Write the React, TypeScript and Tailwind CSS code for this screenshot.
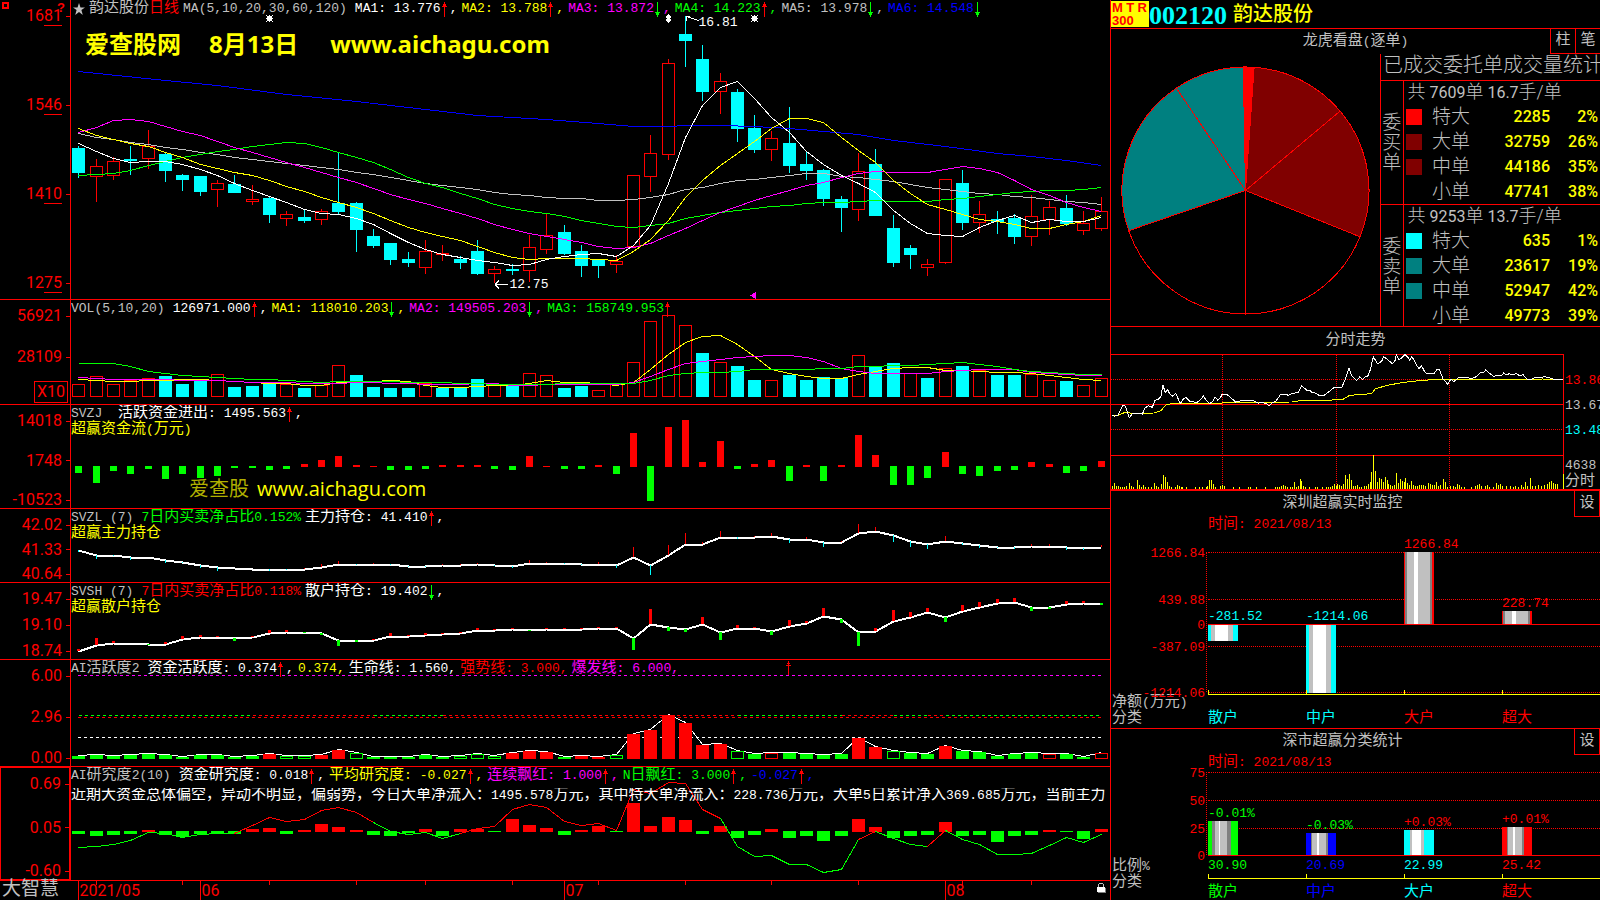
import type { ReactNode } from 'react';

// ---------------------------------------------------------------------------
// Data. All y values are in the plot's own units, counted from the panel's top.
// ---------------------------------------------------------------------------

// [direction, high, bodyTop, bodyBottom, low] - 1 is up (hollow red), 0 is down
type Candle = [number, number, number, number, number];

const CANDLES: Candle[] = [
  [0, 146, 148, 173, 178], [1, 159, 166, 177, 202], [1, 157, 161, 176, 180], [0, 146, 159, 161, 175],
  [1, 130, 146, 159, 169], [0, 153, 154, 171, 182], [0, 174, 175, 180, 191], [0, 176, 176, 192, 196],
  [1, 180, 183, 190, 207], [0, 175, 184, 193, 193], [1, 185, 199, 202, 205], [0, 196, 198, 215, 223],
  [1, 211, 214, 219, 226], [0, 209, 217, 221, 223], [1, 209, 211, 220, 225], [0, 153, 203, 212, 214],
  [0, 202, 203, 230, 252], [0, 229, 236, 246, 248], [0, 243, 243, 260, 265], [0, 252, 259, 263, 267],
  [1, 240, 251, 268, 274], [1, 245, 253, 255, 261], [0, 256, 259, 263, 269], [0, 240, 251, 274, 275],
  [1, 266, 269, 274, 283], [0, 264, 269, 271, 275], [1, 235, 247, 271, 282], [1, 214, 235, 250, 254],
  [0, 225, 232, 254, 255], [0, 245, 251, 266, 277], [0, 259, 259, 266, 278], [1, 255, 261, 265, 273],
  [1, 175, 175, 247, 247], [1, 135, 153, 177, 192], [1, 59, 63, 155, 160], [0, 16, 34, 41, 67],
  [0, 45, 59, 92, 101], [1, 73, 81, 92, 114], [0, 89, 92, 129, 142], [0, 115, 128, 150, 153],
  [1, 131, 138, 150, 161], [0, 107, 143, 166, 173], [0, 151, 164, 171, 180], [0, 169, 170, 199, 206],
  [0, 196, 199, 208, 232], [1, 153, 171, 210, 221], [0, 149, 164, 216, 216], [0, 215, 228, 263, 267],
  [0, 245, 248, 255, 269], [1, 259, 264, 268, 276], [1, 179, 179, 263, 264], [0, 170, 183, 223, 230],
  [1, 201, 214, 223, 233], [0, 211, 219, 222, 234], [0, 214, 218, 237, 244], [1, 195, 216, 237, 246],
  [1, 201, 207, 220, 235], [0, 195, 208, 224, 226], [1, 211, 223, 231, 235], [1, 197, 211, 229, 231],
];

const MA5 = [143, 151, 158, 162, 161, 161, 164, 169, 175, 183, 190, 196, 202, 209, 213, 214, 218, 224, 233, 242, 249, 254, 257, 260, 262, 265, 264, 259, 256, 254, 253, 256, 245, 225, 183, 137, 105, 87, 81, 98, 117, 132, 151, 164, 175, 183, 192, 210, 223, 233, 235, 236, 227, 220, 215, 222, 219, 221, 221, 217];
const MA10 = [128, 135, 139, 143, 146, 152, 157, 164, 168, 172, 175, 180, 186, 191, 197, 202, 207, 213, 220, 227, 232, 236, 240, 246, 252, 257, 259, 258, 258, 258, 259, 260, 251, 239, 220, 197, 180, 165, 153, 141, 128, 118, 118, 122, 137, 150, 162, 180, 193, 204, 209, 214, 219, 221, 224, 228, 228, 224, 221, 215];
const MA20 = [132, 127, 120, 119, 121, 126, 131, 135, 141, 147, 152, 157, 162, 167, 172, 177, 182, 188, 194, 199, 203, 208, 213, 218, 224, 229, 233, 236, 239, 242, 246, 248, 247, 243, 235, 228, 220, 212, 206, 200, 195, 190, 185, 182, 177, 173, 171, 172, 172, 172, 169, 166, 168, 172, 180, 189, 195, 202, 207, 211];
const MA30 = [175, 174, 173, 170, 165, 161, 157, 154, 151, 149, 146, 144, 142, 143, 147, 152, 157, 162, 169, 177, 183, 187, 193, 198, 204, 208, 211, 213, 216, 220, 223, 226, 227, 225, 223, 218, 215, 212, 210, 208, 206, 205, 203, 202, 202, 201, 200, 201, 201, 201, 199, 198, 196, 194, 192, 191, 190, 190, 189, 187];
const MA60 = [133, 137, 139, 142, 144, 147, 149, 152, 154, 157, 159, 161, 163, 165, 167, 169, 172, 174, 177, 180, 183, 185, 187, 189, 192, 194, 195, 197, 198, 198, 200, 200, 199, 197, 194, 189, 187, 183, 180, 179, 177, 175, 173, 173, 176, 177, 179, 181, 184, 187, 189, 191, 193, 194, 196, 197, 199, 201, 202, 204];
// index -> y, the long average is nearly straight
const MA120: [number, number][] = [
  [0, 71], [5, 80], [8, 85], [12, 94], [16, 101], [20, 109], [23, 115], [27, 119], [30, 123], [32, 126],
  [34, 126], [35, 125], [37, 125], [39, 126], [41, 128], [45, 134], [47, 140], [50, 146], [53, 153], [55, 156], [57, 160], [59, 165],
];

// positive is a red bar, negative a cyan or green one
const VOLUME = [12, 20, 12, 16, 18, -21, -13, -18, 22, -10, -11, -14, 12, -9, 11, 31, -22, -10, -9, -9, 13, -9, -9, -18, 11, -12, 23, 21, -9, -11, 6, 12, 34, 75, 81, 71, -44, 34, -31, -17, 16, -22, -17, -20, -19, 41, -31, -34, 23, -19, 28, -31, 26, -22, -22, 22, 16, -16, 11, 18];
const VMA5 = [79, 80, 81, 81, 80, 80, 79, 79, 80, 81, 82, 83, 83, 85, 85, 82, 81, 81, 80, 81, 85, 87, 87, 86, 85, 85, 83, 80, 82, 82, 83, 85, 82, 69, 54, 42, 36, 35, 44, 56, 69, 73, 76, 78, 78, 74, 71, 68, 67, 67, 70, 70, 71, 72, 72, 73, 75, 77, 79, 80];
const VMA10 = [77, 78, 79, 79, 79, 79, 80, 80, 80, 81, 82, 82, 82, 83, 83, 83, 82, 82, 83, 83, 84, 84, 84, 83, 83, 85, 85, 84, 84, 84, 84, 84, 82, 76, 69, 63, 61, 59, 57, 56, 55, 55, 57, 61, 68, 71, 73, 73, 73, 73, 71, 70, 69, 69, 69, 72, 73, 74, 75, 75];
const VMA20 = [63, 63, 63, 66, 71, 73, 75, 76, 77, 78, 79, 79, 80, 81, 82, 81, 81, 81, 81, 82, 82, 82, 83, 83, 84, 84, 84, 84, 83, 83, 83, 83, 83, 80, 75, 73, 72, 72, 71, 69, 69, 69, 69, 68, 68, 66, 66, 65, 65, 64, 63, 62, 64, 66, 69, 71, 72, 73, 74, 74];

const FUND_FLOW = [-7, -17, -5, -8, -3, -13, -8, -12, -10, -2, -2, -4, -3, 3, 7, 11, 2, 1, -4, -4, -3, 2, 2, 2, -3, -4, 11, 1, -3, -3, 2, -8, 34, -35, 40, 47, 5, 26, -3, 3, 7, -15, 2, -15, 2, 32, 12, -19, -19, -12, 15, -8, -10, -5, -4, 5, 3, -7, -5, 6];

const MAIN_HOLD = [41, 46, 46, 48, 48, 51, 53, 56, 58, 59, 60, 60, 60, 60, 58, 55, 55, 55, 55, 57, 57, 56, 56, 55, 56, 57, 54, 54, 54, 55, 55, 56, 48, 56, 46, 35, 35, 28, 28, 28, 27, 30, 30, 33, 33, 24, 22, 26, 32, 35, 32, 34, 36, 38, 38, 37, 37, 38, 39, 38];
const MAIN_TICKS = [-2, -4, -1, -3, 0, -3, -1, -3, -4, 0, 0, -2, -1, 1, 3, 3, -1, 1, -1, -1, -1, 1, 1, 1, -1, -2, 3, 1, -1, -1, 2, -3, 10, -10, 10, 11, 2, 6, -2, 1, 3, -4, 2, -5, 1, 9, 4, -7, -6, -5, 5, -2, -3, -1, -2, 2, 2, -3, -2, 2];

const RETAIL_HOLD = [68, 62, 60, 60, 61, 61, 56, 54, 54, 55, 54, 50, 49, 49, 50, 57, 57, 57, 53, 53, 52, 51, 50, 47, 47, 46, 47, 46, 46, 46, 45, 45, 55, 41, 44, 46, 41, 49, 45, 45, 48, 43, 40, 33, 36, 49, 48, 38, 34, 29, 34, 28, 24, 20, 19, 24, 24, 21, 20, 20];
const RETAIL_TICKS = [2, 7, 2, 0, -1, 2, 3, 2, 1, -3, 1, 3, 2, -1, -2, -6, -2, 1, 3, 1, 2, 1, 1, 2, 1, 1, -1, 1, 1, 1, 1, 1, -12, 15, -4, -3, 7, -8, 3, 1, -4, 6, 2, 8, -4, -14, 3, 11, 5, 4, -5, 6, 5, 4, 4, -4, -2, 3, 2, -2];

// g/r are solid green/red bars, G/R the hollow ones
const ACTIVITY = 'g3 g4 g3 g4 g5 g4 g2 g4 g4 g2 g3 r5 G3 G3 r4 r9 G6 g2 g2 g2 g4 g2 G3 G5 G3 r6 r8 r7 g2 r3 r2 G4 r25 r29 r44 r36 r14 r15 G8 g5 R6 g6 g5 g4 g5 r21 r12 G8 g6 g5 r13 g8 g7 g3 g5 g6 R5 g5 g2 R6'
  .split(' ')
  .map((s) => ({ kind: s[0], h: Number(s.slice(1)) }));
const ACTIVITY_BANDS: [number, number, string][] = [
  [0, 10, '#0f0'], [10, 17, '#f00'], [17, 21, '#0f0'], [21, 38, '#f00'], [38, 44, '#0f0'],
  [44, 47, '#f00'], [47, 49, '#0f0'], [49, 50, '#f00'], [50, 59, '#0f0'],
];

const RESEARCH = [-3, -5, -4, -3, 2, -4, -6, -3, -3, -3, 3, 4, -3, 2, 8, 5, 2, -4, -5, -2, 3, -5, 3, 3, -1, 13, 7, 4, -4, 2, 6, -1, 29, 6, 15, 12, -3, 6, -7, -4, 3, -7, -5, -10, -5, 13, 5, -7, -5, -4, 10, -5, -4, -11, -5, -4, 2, -1, -8, 3];
const RESEARCH_LINE = [80, 79, 77, 73, 65, 66, 70, 67, 66, 66, 58, 50, 54, 52, 43, 40, 45, 55, 64, 67, 65, 71, 66, 61, 59, 42, 37, 40, 54, 58, 56, 63, 22, 26, 15, 16, 42, 51, 79, 89, 88, 97, 97, 105, 102, 72, 64, 71, 77, 79, 63, 72, 77, 87, 87, 86, 78, 70, 75, 67];
const RESEARCH_BANDS: [number, number, string][] = [
  [0, 9, '#0f0'], [9, 17, '#f00'], [17, 22, '#0f0'], [22, 37, '#f00'], [37, 45, '#0f0'],
  [45, 46, '#f00'], [46, 49, '#0f0'], [49, 50, '#f00'], [50, 59, '#0f0'],
];

const PRICE = '20,271 28,275 38,272 46,258 54,242 60,244 66,258 73,279 84,265 96,265 112,268 120,250 130,243 142,248 150,227 160,224 168,215 174,180 180,203 188,195 194,208 204,215 212,206 226,237 236,222 244,219 256,231 276,233 286,226 295,214 304,228 314,237 324,229 330,217 338,226 346,219 352,208 364,208 376,218 392,232 416,227 444,227 460,236 470,233 482,236 493,243 502,234 512,230 528,208 544,208 550,213 560,206 580,204 590,184 600,192 606,198 614,196 622,204 630,205 646,214 656,213 672,201 684,191 690,187 700,190 710,189 716,175 724,155 732,131 740,153 755,168 764,157 772,164 780,157 788,155 797,133 802,106 806,97 812,108 818,117 830,110 836,96 846,103 862,117 870,108 874,89 882,105 890,100 900,89 908,97 914,106 920,96 926,104 934,120 942,132 950,124 960,143 966,146 988,146 996,134 1004,136 1014,163 1028,178 1038,163 1046,171 1062,158 1086,158 1100,162 1116,155 1128,142 1136,144 1142,136 1150,143 1166,155 1180,151 1188,154 1196,145 1206,151 1212,147 1222,151 1234,147 1244,153 1254,150 1264,162 1276,166 1290,158 1300,160 1318,156 1334,160 1350,165 1374,166';
const AVERAGE = '20,272 40,272 58,264 110,267 146,265 168,258 184,239 215,236 350,236 356,233 560,232 596,226 680,226 690,223 716,223 734,212 800,207 810,193 846,182 880,176 920,170 970,166 1300,165 1310,163 1374,164';
const MINUTE_VOL = '22,484 28,474 34,483 40,484 46,486 52,486 58,486 64,483 73,474 80,485 86,487 97,465 104,482 110,486 115,482 122,488 130,488 138,487 148,474 154,485 160,486 168,477 175,450 181,456 187,472 193,484 200,486 210,488 217,480 222,485 228,486 233,486 245,488 270,488 282,488 292,488 304,488 308,485 314,465 320,465 326,477 332,487 346,485 352,482 358,483 385,488 403,488 430,488 436,488 454,488 480,488 512,488 518,487 524,487 530,485 536,482 542,485 548,487 556,487 562,487 568,471 574,487 580,485 586,462 590,468 596,483 602,487 612,486 630,488 638,486 652,487 664,488 670,487 676,487 682,485 688,477 694,483 698,478 704,482 710,485 716,477 722,450 728,462 733,447 739,465 745,483 752,485 757,482 763,486 770,487 778,483 784,485 790,477 796,471 800,441 805,390 811,438 817,471 824,459 830,462 836,471 842,456 847,465 850,477 856,480 862,484 868,480 874,444 880,474 886,462 892,468 898,471 901,459 907,474 913,480 919,468 925,480 931,484 937,483 943,480 949,480 955,480 960,483 970,474 976,479 982,482 988,480 994,471 1000,484 1006,481 1015,462 1021,471 1027,486 1036,485 1046,485 1052,486 1057,478 1063,482 1069,487 1078,488 1100,488 1110,485 1116,482 1123,477 1130,483 1140,485 1147,480 1154,487 1165,486 1174,474 1180,480 1186,477 1192,484 1204,484 1216,484 1224,486 1232,484 1240,486 1249,480 1256,487 1261,471 1268,484 1276,459 1282,484 1290,484 1300,480 1308,485 1318,480 1326,477 1333,471 1339,468 1345,474 1351,477 1357,478 1374,447'
  .split(' ')
  .map((p) => p.split(',').map(Number));

// ---------------------------------------------------------------------------
// Helpers
// ---------------------------------------------------------------------------

const PLOT_W = 1039;
const cx = (i: number) => Math.round(7.3 + 17.33 * i) + 0.5;
const linePoints = (ys: number[], from = 0) =>
  ys.map((y, i) => `${cx(i + from)},${y + 0.5}`).join(' ');

// Chinese glyphs run larger than the fixed-width latin ones
function Mixed({ text }: { text: string }) {
  return (
    <>
      {text.split(/([\u3000-\u9fff\uff00-\uffef]+)/).map((part, i) =>
        i % 2 ? (
          <span key={i} className="text-[15px]">
            {part}
          </span>
        ) : (
          part
        ),
      )}
    </>
  );
}

function Arrow({ up }: { up: boolean }) {
  return (
    <svg viewBox="0 0 7 15" className="mr-0.5 h-[15px] w-[7px] shrink-0" shapeRendering="crispEdges">
      <path
        d={up ? 'M3 0h1v15h-1zM2 2h3v2h-3zM1 4h5v1h-5z' : 'M3 0h1v15h-1zM2 11h3v2h-3zM1 10h5v1h-5z'}
        fill={up ? '#f00' : '#0f0'}
      />
    </svg>
  );
}

type Item = { text: string; color: string; dir?: 'up' | 'down'; last?: boolean };

function Legend({ title, items }: { title: ReactNode; items: Item[] }) {
  return (
    <div className="relative flex h-[17px] items-center gap-1 whitespace-pre pt-px leading-4">
      <span className="mr-1 flex text-[#c0c0c0]">{title}</span>
      {items.map((it) => (
        <span key={it.text} className={`flex items-center ${it.color}`}>
          <span>
            <Mixed text={it.text} />
          </span>
          {it.dir && <Arrow up={it.dir === 'up'} />}
          {!it.last && <span>,</span>}
        </span>
      ))}
    </div>
  );
}

function Axis({ labels, underline, boxLast }: { labels: string[]; underline?: boolean; boxLast?: boolean }) {
  return (
    <div
      className={`flex flex-col items-end justify-between border-r border-[#f00] font-[Roboto,sans-serif] text-base text-[#f00] ${
        underline ? 'py-[7px]' : '-mb-px pt-[7px]'
      }`}
    >
      {labels.map((l, i) =>
        boxLast && i === labels.length - 1 ? (
          <span key={l} className="-mt-2 mr-0.5 mb-0.5 h-[22px] border border-[#f00] px-0.5 leading-5">
            {l}
          </span>
        ) : (
          <span key={l} className="flex h-[18px] items-center gap-1 leading-[18px]">
            <span>
              {underline ? l.slice(0, 2) : l}
              {underline && <span className="border-b border-[#f00]">{l.slice(2)}</span>}
            </span>
            <span className="h-px w-1 bg-[#f00]" />
          </span>
        ),
      )}
    </div>
  );
}

function Plot({ h, children }: { h: number; children: ReactNode }) {
  return (
    <svg
      viewBox={`0 0 ${PLOT_W} ${h}`}
      preserveAspectRatio="none"
      shapeRendering="crispEdges"
      fill="none"
      className="absolute inset-0 h-full w-full"
    >
      {children}
    </svg>
  );
}

function Panel({ axis, children }: { axis: ReactNode; children: ReactNode }) {
  return (
    <section className="grid min-h-0 grid-cols-[71px_minmax(0,1fr)] border-b border-[#f00]">
      {axis}
      <div className="relative overflow-hidden">{children}</div>
    </section>
  );
}

function Flower({ x, y }: { x: number; y: number }) {
  return (
    <path
      transform={`translate(${x} ${y})`}
      d="M-2 -2h5v5h-5zM-3 -3h1v1h-1zM3 -3h1v1h-1zM-3 3h1v1h-1zM3 3h1v1h-1zM0 -3h1v1h-1zM0 3h1v1h-1zM-3 0h1v1h-1zM3 0h1v1h-1z"
      fill="#fff"
    />
  );
}

// ---------------------------------------------------------------------------
// Left side: candles and indicators
// ---------------------------------------------------------------------------

function CandlePanel() {
  return (
    <Panel axis={<Axis labels={['1681', '1546', '1410', '1275']} underline />}>
      <Plot h={299}>
        {CANDLES.map(([up, hi, top, bot, lo], i) =>
          up ? (
            <g key={i} stroke="#f00">
              <path d={`M${cx(i)} ${hi}V${top}M${cx(i)} ${bot}V${lo}`} />
              <rect x={cx(i) - 6} y={top + 0.5} width={12} height={Math.max(bot - top - 1, 1)} />
            </g>
          ) : (
            <g key={i}>
              <path d={`M${cx(i)} ${hi}V${lo}`} stroke="#0ff" />
              <rect x={cx(i) - 6.5} y={top} width={13} height={bot - top} fill="#0ff" />
            </g>
          ),
        )}
        <polyline points={MA120.map(([i, y]) => `${cx(i)},${y + 0.5}`).join(' ')} stroke="#00f" />
        <polyline points={linePoints(MA60)} stroke="#c0c0c0" />
        <polyline points={linePoints(MA30)} stroke="#0f0" />
        <polyline points={linePoints(MA20)} stroke="#f0f" />
        <polyline points={linePoints(MA10)} stroke="#ff0" />
        <polyline points={linePoints(MA5)} stroke="#fff" />
        <Flower x={198} y={18} />
        <Flower x={683} y={18} />
        <path d="M597 14h1v9h-1zM596 15h3v7h-3zM595 16h5v2h-5zM595 19h5v2h-5z" fill="#fff" />
        <path d="M615 16.5l13 4M615 16.5h4M615.5 16v5" stroke="#fff" />
        <path d="M424 284.5h13M424 284.5l4 -4M424 284.5l4 4" stroke="#fff" />
        <path d="M679 295.5l6 -4v8z" fill="#f0f" />
      </Plot>
      <Legend
        title={
          <>
            <svg viewBox="0 0 12 12" className="mt-0.5 mr-1 ml-0.5 size-3" fill="#c0c0c0">
              <path d="M6 0l1.5 4.4H12L8.4 7.1 9.8 12 6 9 2.2 12l1.4-4.9L0 4.4h4.5z" />
            </svg>
            <Mixed text="韵达股份" />
            <span className="mr-1 text-[#f00]">
              <Mixed text="日线" />
            </span>
            MA(5,10,20,30,60,120)
          </>
        }
        items={[
          { text: 'MA1: 13.776', color: 'text-white', dir: 'up' },
          { text: 'MA2: 13.788', color: 'text-[#ff0]', dir: 'up' },
          { text: 'MA3: 13.872', color: 'text-[#f0f]', dir: 'down' },
          { text: 'MA4: 14.223', color: 'text-[#0f0]', dir: 'up' },
          { text: 'MA5: 13.978', color: 'text-[#c0c0c0]', dir: 'down' },
          { text: 'MA6: 14.548', color: 'text-[#00f]', dir: 'down', last: true },
        ]}
      />
      <div className="absolute top-[29px] left-[14px] flex gap-7 whitespace-nowrap font-['Noto_Sans','Noto_Sans_CJK_SC',sans-serif] text-2xl leading-[30px] font-bold text-[#ff0]">
        <span>爱查股网</span>
        <span className="mr-1">8月13日</span>
        <span>www.aichagu.com</span>
      </div>
      <span className="absolute top-[15px] left-[60.4%] text-white">16.81</span>
      <span className="absolute top-[277px] left-[42.2%] text-white">12.75</span>
    </Panel>
  );
}

function VolumePanel() {
  return (
    <Panel axis={<Axis labels={['56921', '28109', 'X10']} boxLast />}>
      <Plot h={104}>
        {VOLUME.map((v, i) =>
          v > 0 ? (
            <rect key={i} x={cx(i) - 6} y={97 - v - 0.5} width={12} height={v} stroke="#f00" />
          ) : (
            <rect key={i} x={cx(i) - 6.5} y={97 + v} width={13} height={-v} fill="#0ff" />
          ),
        )}
        <polyline points={linePoints(VMA5)} stroke="#ff0" />
        <polyline points={linePoints(VMA10)} stroke="#f0f" />
        <polyline points={linePoints(VMA20)} stroke="#0f0" />
      </Plot>
      <Legend
        title="VOL(5,10,20)"
        items={[
          { text: '126971.000', color: 'text-white', dir: 'up' },
          { text: 'MA1: 118010.203', color: 'text-[#ff0]', dir: 'down' },
          { text: 'MA2: 149505.203', color: 'text-[#f0f]', dir: 'down' },
          { text: 'MA3: 158749.953', color: 'text-[#0f0]', dir: 'up', last: true },
        ]}
      />
    </Panel>
  );
}

function Subtitle({ text }: { text: string }) {
  return (
    <div className="relative h-4 leading-4 text-[#ff0]">
      <Mixed text={text} />
    </div>
  );
}

function FlowPanel() {
  return (
    <Panel axis={<Axis labels={['14018', '1748', '-10523']} />}>
      <Plot h={103}>
        {FUND_FLOW.map((v, i) => (
          <rect
            key={i}
            x={cx(i) - 3.5}
            y={v > 0 ? 62 - v : 61}
            width={7}
            height={Math.abs(v)}
            fill={v > 0 ? '#f00' : '#0f0'}
          />
        ))}
      </Plot>
      <Legend title="SVZJ " items={[{ text: '活跃资金进出: 1495.563', color: 'text-white', dir: 'up' }]} />
      <Subtitle text="超赢资金流(万元)" />
      <div className="absolute top-[70px] left-[118px] flex gap-2 whitespace-nowrap font-['Open_Sans','Noto_Sans_CJK_SC',sans-serif] text-xl leading-7 text-[#ff0]">
        <span className="text-[#b0b000]">爱查股</span>
        <span>www.aichagu.com</span>
      </div>
    </Panel>
  );
}

function MainHoldPanel() {
  return (
    <Panel axis={<Axis labels={['42.02', '41.33', '40.64']} />}>
      <Plot h={73}>
        <polyline points={linePoints(MAIN_HOLD)} stroke="#fff" strokeWidth={2} />
        {MAIN_TICKS.map((t, i) => (
          <path key={i} d={`M${cx(i)} ${MAIN_HOLD[i]}v${-t}`} stroke={t > 0 ? '#f00' : '#0ff'} />
        ))}
      </Plot>
      <Legend
        title="SVZL (7)"
        items={[
          { text: '7日内买卖净占比0.152%', color: 'text-[#0f0]', last: true },
          { text: '主力持仓: 41.410', color: 'text-white', dir: 'up' },
        ]}
      />
      <Subtitle text="超赢主力持仓" />
    </Panel>
  );
}

function RetailHoldPanel() {
  return (
    <Panel axis={<Axis labels={['19.47', '19.10', '18.74']} />}>
      <Plot h={76}>
        <polyline points={linePoints(RETAIL_HOLD)} stroke="#fff" strokeWidth={2} />
        {RETAIL_TICKS.map((t, i) => (
          <rect
            key={i}
            x={cx(i) - 1.5}
            y={t > 0 ? RETAIL_HOLD[i] - t : RETAIL_HOLD[i]}
            width={3}
            height={Math.abs(t)}
            fill={t > 0 ? '#f00' : '#0f0'}
          />
        ))}
      </Plot>
      <Legend
        title="SVSH (7)"
        items={[
          { text: '7日内买卖净占比0.118%', color: 'text-[#f00]', last: true },
          { text: '散户持仓: 19.402', color: 'text-white', dir: 'down' },
        ]}
      />
      <Subtitle text="超赢散户持仓" />
    </Panel>
  );
}

function ActivityPanel() {
  return (
    <Panel axis={<Axis labels={['6.00', '2.96', '0.00']} />}>
      <Plot h={106}>
        <g strokeDasharray="3 3">
          <path d="M7 15.5H1032" stroke="#f0f" />
          {ACTIVITY_BANDS.map(([a, b, color]) => (
            <path key={a} d={`M${cx(a)} 55.5H${cx(b)}`} stroke={color} />
          ))}
          <path d="M7 57.5H1032" stroke="#f00" />
          <path d="M7 77.5H1032" stroke="#fff" />
        </g>
        <polyline points={linePoints(ACTIVITY.map((a) => 98 - a.h))} stroke="#fff" />
        {ACTIVITY.map(({ kind, h }, i) => {
          const color = kind.toLowerCase() === 'r' ? '#f00' : '#0f0';
          return kind === 'g' || kind === 'r' ? (
            <rect key={i} x={cx(i) - 6.5} y={99 - h} width={13} height={h} fill={color} />
          ) : (
            <rect key={i} x={cx(i) - 6} y={99.5 - h} width={12} height={h - 1} stroke={color} />
          );
        })}
        <path d="M717.5 1v14M716 3.5h3M715 5.5h5" stroke="#f00" />
      </Plot>
      <Legend
        title={<Mixed text="AI活跃度2" />}
        items={[
          { text: '资金活跃度: 0.374', color: 'text-white', dir: 'up' },
          { text: '0.374', color: 'text-[#ff0]' },
          { text: '生命线: 1.560', color: 'text-white' },
          { text: '强势线: 3.000', color: 'text-[#f00]' },
          { text: '爆发线: 6.000', color: 'text-[#f0f]' },
        ]}
      />
    </Panel>
  );
}

function ResearchPanel() {
  return (
    <section className="grid min-h-0 grid-cols-[71px_minmax(0,1fr)] border-b border-[#f00]">
      <div className="grid border border-[#f00]">
        <Axis labels={['0.69', '0.05', '-0.60']} />
      </div>
      <div className="relative overflow-hidden">
        <Plot h={113}>
          {RESEARCH.map((v, i) => (
            <rect
              key={i}
              x={cx(i) - 6.5}
              y={v > 0 ? 65 - v : 64}
              width={13}
              height={Math.abs(v)}
              fill={v > 0 ? '#f00' : '#0f0'}
            />
          ))}
          {RESEARCH_BANDS.map(([a, b, color]) => (
            <polyline key={a} points={linePoints(RESEARCH_LINE.slice(a, b + 1), a)} stroke={color} />
          ))}
        </Plot>
        <Legend
          title={<Mixed text="AI研究度2(10)" />}
          items={[
            { text: '资金研究度: 0.018', color: 'text-white', dir: 'up' },
            { text: '平均研究度: -0.027', color: 'text-[#ff0]', dir: 'up' },
            { text: '连续飘红: 1.000', color: 'text-[#f0f]', dir: 'up' },
            { text: 'N日飘红: 3.000', color: 'text-[#0f0]', dir: 'up' },
            { text: '-0.027', color: 'text-[#00f]', dir: 'up' },
          ]}
        />
        <p className="relative mt-1 h-4 overflow-hidden whitespace-nowrap leading-4 text-white">
          <Mixed text="近期大资金总体偏空，异动不明显，偏弱势，今日大单净流入：1495.578万元，其中特大单净流入：228.736万元，大单5日累计净入369.685万元，当前主力" />
        </p>
      </div>
    </section>
  );
}

const MONTHS: [number, string][] = [[0, '2021/05'], [7, '06'], [28, '07'], [50, '08']];

function TimeAxis() {
  return (
    <footer className="grid min-h-0 grid-cols-[71px_minmax(0,1fr)]">
      <span className="pl-0.5 text-[19px] leading-[19px] whitespace-nowrap text-[#c0c0c0]">大智慧</span>
      <div className="relative overflow-hidden">
        <Plot h={19}>
          {MONTHS.map(([i]) => (
            <path key={i} d={`M${cx(i)} 0V19`} stroke="#f00" />
          ))}
          {[1, 6, 11, 16, 20, 25, 30, 35, 40, 45, 51, 55].map((i) => (
            <path key={i} d={`M${cx(i)} 0v4`} stroke="#f00" />
          ))}
        </Plot>
        {MONTHS.map(([i, label]) => (
          <span
            key={label}
            className="absolute top-0 pl-px font-[Roboto,sans-serif] text-base leading-[19px] text-[#f00]"
            style={{ left: `${(cx(i) / PLOT_W) * 100}%` }}
          >
            {label}
          </span>
        ))}
        <svg viewBox="0 0 11 12" className="absolute top-px right-[3px] h-3 w-[11px]" shapeRendering="crispEdges">
          <path d="M3 1h4M2 2v3M7.500 2v3" stroke="#c0c0c0" fill="none" />
          <path d="M2 6h8v5h-8z" fill="#808080" />
          <path d="M1 5h8v5h-8z" fill="#fff" />
        </svg>
      </div>
    </footer>
  );
}

// ---------------------------------------------------------------------------
// Right side
// ---------------------------------------------------------------------------

const PIE_R = 123.5;
const polar = (deg: number) => {
  const a = (deg * Math.PI) / 180;
  return `${(124.5 + PIE_R * Math.sin(a)).toFixed(1)} ${(124.5 - PIE_R * Math.cos(a)).toFixed(1)}`;
};
const SLICES: [number, number, string][] = [
  [4, 50, '#800000'], [50, 112, '#800000'], [112, 180, '#000'],
  [180, 251, '#000'], [251, 326, '#008080'], [326, 359, '#008080'], [-1, 4, '#f00'],
];

function Pie() {
  return (
    <svg viewBox="0 0 249 249" className="mx-auto w-[249px]" shapeRendering="crispEdges">
      {SLICES.map(([a, b, fill]) => (
        <path
          key={a}
          d={`M124.5 124.5L${polar(a)}A${PIE_R} ${PIE_R} 0 0 1 ${polar(b)}z`}
          fill={fill}
          stroke="#f00"
        />
      ))}
    </svg>
  );
}

type Order = [string, string, string, string];
const ORDERS: { side: string; count: string; avg: string; rows: Order[] }[] = [
  {
    side: '委买单',
    count: '7609',
    avg: '16.7',
    rows: [
      ['特大', 'bg-[#f00]', '2285', '2%'],
      ['大单', 'bg-[#800000]', '32759', '26%'],
      ['中单', 'bg-[#800000]', '44186', '35%'],
      ['小单', 'bg-black', '47741', '38%'],
    ],
  },
  {
    side: '委卖单',
    count: '9253',
    avg: '13.7',
    rows: [
      ['特大', 'bg-[#0ff]', '635', '1%'],
      ['大单', 'bg-[#008080]', '23617', '19%'],
      ['中单', 'bg-[#008080]', '52947', '42%'],
      ['小单', 'bg-black', '49773', '39%'],
    ],
  },
];

function OrderTable() {
  return (
    <table className="w-full table-fixed border-collapse font-[Roboto,'Noto_Sans_CJK_SC',sans-serif] text-base text-[#c0c0c0]">
      <colgroup>
        <col className="w-[22px]" />
        <col className="w-[25px]" />
        <col className="w-[42px]" />
        <col />
        <col className="w-[50px]" />
      </colgroup>
      {ORDERS.map((o) => (
        <tbody key={o.side} className="border-t border-[#f00]">
          <tr className="h-6">
            <th rowSpan={5} scope="rowgroup" className="border-r border-[#f00] px-px text-[19px] leading-5 font-light break-all">
              {o.side}
            </th>
            <td colSpan={4} className="p-0 pl-1 leading-[22px] whitespace-nowrap">
              <span className="text-[18px] font-light">共</span> {o.count}
              <span className="text-[18px] font-light">单</span> {o.avg}
              <span className="text-[18px] font-light">手/单</span>
            </td>
          </tr>
          {o.rows.map(([label, swatch, vol, pct]) => (
            <tr key={label} className="h-[25px] leading-[22px]">
              <td className="p-0">
                <div className={`ml-0.5 size-4 ${swatch}`} />
              </td>
              <th scope="row" className="p-0 text-right text-[19px] font-light">
                {label}
              </th>
              <td className="p-0 text-right font-medium text-[#ff0]">{vol}</td>
              <td className="p-0 pr-0.5 text-right font-medium text-[#ff0]">{pct}</td>
            </tr>
          ))}
        </tbody>
      ))}
    </table>
  );
}

function Intraday() {
  return (
    <section className="h-[164px] overflow-hidden border-b-2 border-[#f00]">
      <h2 className="flex h-[27px] items-center justify-center text-[15px] text-[#c0c0c0]">分时走势</h2>
      <div className="flex">
        <svg
          viewBox="18 88 1359 405"
          preserveAspectRatio="none"
          className="h-[135px] min-w-0 flex-1 [&_*]:[vector-effect:non-scaling-stroke]"
          fill="none"
          stroke="#f00"
          shapeRendering="crispEdges"
        >
          <path d="M18 89.500H1375V493M18 238.500H1375M18 391.500H1375" />
          <path d="M18 163.500H1375M18 313.500H1375M352.500 90V490M694.500 90V490M1033.500 90V490" strokeDasharray="1 1" />
          <path d={MINUTE_VOL.map(([x, y]) => `M${x} ${y}V493`).join('')} stroke="#ff0" />
          <polyline points={AVERAGE} stroke="#ff0" />
          <polyline points={PRICE} stroke="#fff" />
        </svg>
        <div className="flex w-9 flex-col gap-[9px] overflow-hidden pt-[19px] pl-px leading-4 text-[#c0c0c0]">
          <span className="text-[#f00]">13.86</span>
          <span>13.67</span>
          <span className="text-[#0ff]">13.48</span>
          <div className="mt-2.5">
            4638
            <br />
            <Mixed text="分时" />
          </div>
        </div>
      </div>
    </section>
  );
}

type Bar = { name: string; color: string; top: number; h: number; note: string; noteTop: number; stripes: string; foot?: string };

const NET: Bar[] = [
  { name: '散户', color: 'text-[#0ff]', top: 93, h: 16, note: '-281.52', noteTop: 77, stripes: 'c3 g4 w13 g5 c5' },
  { name: '中户', color: 'text-[#0ff]', top: 93, h: 68, note: '-1214.06', noteTop: 77, stripes: 'c3 g4 w13 g5 c5' },
  { name: '大户', color: 'text-[#f00]', top: 20, h: 72, note: '1266.84', noteTop: 5, stripes: 'c1 d2 g7 w4 g12 d2 c2' },
  { name: '超大', color: 'text-[#f00]', top: 79, h: 13, note: '228.74', noteTop: 64, stripes: 'c1 d2 g7 w4 g12 d2 c2' },
];

const SHARE: Bar[] = [
  { name: '散户', color: 'text-[#0f0]', top: 51, h: 34, note: '-0.01%', noteTop: 36, stripes: 'c4 d3 g4 w1 g7 d4 c7', foot: '30.90' },
  { name: '中户', color: 'text-[#00f]', top: 63, h: 22, note: '-0.03%', noteTop: 48, stripes: 'c5 d1 g5 w2 g7 d2 c8', foot: '20.69' },
  { name: '大户', color: 'text-[#0ff]', top: 60, h: 25, note: '+0.03%', noteTop: 45, stripes: 'c6 g2 w9 g3 c10', foot: '22.99' },
  { name: '超大', color: 'text-[#f00]', top: 57, h: 28, note: '+0.01%', noteTop: 42, stripes: 'c5 d1 g5 w2 g7 d2 c8', foot: '25.42' },
];

const STRIPE: Record<string, string> = { c: 'currentColor', d: '#808080', g: '#c0c0c0', w: '#fff' };

function StripedBar({ bar }: { bar: Bar }) {
  let x = 0;
  return (
    <svg
      viewBox="0 0 30 1"
      preserveAspectRatio="none"
      shapeRendering="crispEdges"
      className="absolute left-0 w-[30px]"
      style={{ top: bar.top, height: bar.h }}
    >
      {bar.stripes.split(' ').map((s, i) => {
        const w = Number(s.slice(1));
        x += w;
        return <rect key={i} x={x - w} width={w} height={1} fill={STRIPE[s[0]]} />;
      })}
    </svg>
  );
}

interface BarChartProps {
  title: string;
  bars: Bar[];
  height: string;
  labels: [string, number][]; // text, y of its grid line
  zero: number;
  unit: string;
}

function BarChart({ title, bars, height, labels, zero, unit }: BarChartProps) {
  const last = labels[labels.length - 1][1];
  return (
    <section className="overflow-hidden text-[#c0c0c0]">
      <div className="flex h-[26px] items-stretch">
        <h2 className="flex flex-1 items-center justify-center text-[15px]">{title}</h2>
        <button className="w-[26px] border border-t-0 border-[#f00] text-[15px]">设</button>
      </div>
      <div className="h-[15px] pl-[97px] leading-4 text-[#f00]">
        <Mixed text="时间: 2021/08/13" />
      </div>
      <div className={`grid grid-cols-[97px_minmax(0,1fr)] ${height}`}>
        <div className="relative text-right leading-4 text-[#f00]">
          {labels.map(([l, y]) => (
            <span key={l} className="absolute right-[3px]" style={{ top: y - 6 }}>
              {l}
            </span>
          ))}
          <span
            className="absolute right-px border-r border-dotted border-[#f00]"
            style={{ top: labels[0][1], height: last - labels[0][1] }}
          />
        </div>
        <div className="relative">
          {labels.map(([l, y]) => (
            <div
              key={l}
              className={`absolute inset-x-0 border-t border-[#f00] ${y === zero ? 'border-solid' : 'border-dotted'}`}
              style={{ top: y }}
            />
          ))}
          <div className="absolute inset-0 grid grid-cols-4 border-b border-[#ff0]">
            {bars.map((b) => (
              <div key={b.name} className={`relative ${b.color}`}>
                <StripedBar bar={b} />
                <span
                  className={`absolute left-0 leading-4 ${b.note === '-0.03%' ? 'text-[#0f0]' : b.note === '+0.03%' ? 'text-[#f00]' : ''}`}
                  style={{ top: b.noteTop }}
                >
                  {b.note}
                </span>
                {b.foot && <span className="absolute bottom-1 left-0 leading-4">{b.foot}</span>}
                <span className="absolute bottom-0 left-0 h-1 w-px bg-[#ff0]" />
              </div>
            ))}
          </div>
        </div>
      </div>
      <div className="grid grid-cols-[97px_minmax(0,1fr)]">
        <div className={`pl-px leading-4 ${bars[0].foot ? '-mt-5' : ''}`}>
          <Mixed text={unit} />
          <br />
          <Mixed text="分类" />
        </div>
        <div className={`grid grid-cols-4 leading-[15px] ${bars[0].foot ? 'pt-1.5' : 'pt-4'}`}>
          {bars.map((b) => (
            <span key={b.name} className={b.color}>
              <Mixed text={b.name} />
            </span>
          ))}
        </div>
      </div>
    </section>
  );
}

function QuotePanel() {
  return (
    <aside className="min-w-0 overflow-hidden border-l border-[#f00]">
      <header className="flex h-[29px] items-center border-b border-[#f00]">
        <div className="h-[26px] w-[38px] bg-[#ff0] pl-px font-['Liberation_Sans',sans-serif] text-[13px] leading-[13px] font-bold text-[#f00]">
          <div className="flex justify-between pr-0.5">
            <span>M</span>
            <span>T</span>
            <span>R</span>
          </div>
          300
        </div>
        <div className="flex items-center pt-1 leading-7">
          <span className="font-['Liberation_Serif',serif] text-[26px] font-bold text-[#0ff]">002120</span>
          <h1 className="ml-1.5 text-xl leading-7 font-medium text-[#ff0]">韵达股份</h1>
        </div>
      </header>

      <section className="flex h-[298px] flex-col overflow-hidden border-b border-[#f00] text-[#c0c0c0]">
        <div className="grid h-[25px] shrink-0 grid-cols-[1fr_auto_1fr]">
          <h2 className="col-start-2 self-center leading-4">
            <Mixed text="龙虎看盘(逐单)" />
          </h2>
          <div className="flex justify-self-end border-b border-[#f00] text-[15px]">
            <button className="w-[25px] border-l border-[#f00]">柱</button>
            <button className="w-[25px] border-l border-[#f00]">笔</button>
          </div>
        </div>
        <div className="grid min-h-0 flex-1 grid-cols-[minmax(0,1fr)_220px]">
          <div className="flex items-start pt-3">
            <Pie />
          </div>
          <div className="border-l border-[#f00]">
            <h3 className="h-[26px] pl-0.5 text-xl leading-[26px] font-light whitespace-nowrap">已成交委托单成交量统计</h3>
            <OrderTable />
          </div>
        </div>
      </section>

      <Intraday />
      <div className="border-b border-[#f00]">
        <div className="h-[237px]">
          <BarChart
            title="深圳超赢实时监控"
            bars={NET}
            height="h-[163px]"
            labels={[['1266.84', 20], ['439.88', 67], ['0', 92], ['-387.09', 114], ['-1214.06', 160]]}
            zero={92}
            unit="净额(万元)"
          />
        </div>
      </div>
      <BarChart
        title="深市超赢分类统计"
        bars={SHARE}
        height="h-[109px]"
        labels={[['75', 2], ['50', 30], ['25', 58], ['0', 85]]}
        zero={85}
        unit="比例%"
      />
    </aside>
  );
}

export default function App() {
  return (
    <main className="grid min-h-screen grid-cols-[minmax(0,1110fr)_minmax(0,490fr)] overflow-hidden bg-black font-['Liberation_Mono','Noto_Sans_CJK_SC',monospace] text-[13px] leading-4">
      <div className="relative grid grid-rows-[300fr_105fr_104fr_74fr_77fr_107fr_114fr_19fr]">
        <CandlePanel />
        <VolumePanel />
        <FlowPanel />
        <MainHoldPanel />
        <RetailHoldPanel />
        <ActivityPanel />
        <ResearchPanel />
        <TimeAxis />
        <span className="absolute top-0.5 left-0.5 size-[7px] border-2 border-[#f00]" />
        <span className="absolute top-0 left-[57px] font-['Liberation_Sans',sans-serif] font-bold text-[#f00]">?</span>
      </div>
      <QuotePanel />
    </main>
  );
}
